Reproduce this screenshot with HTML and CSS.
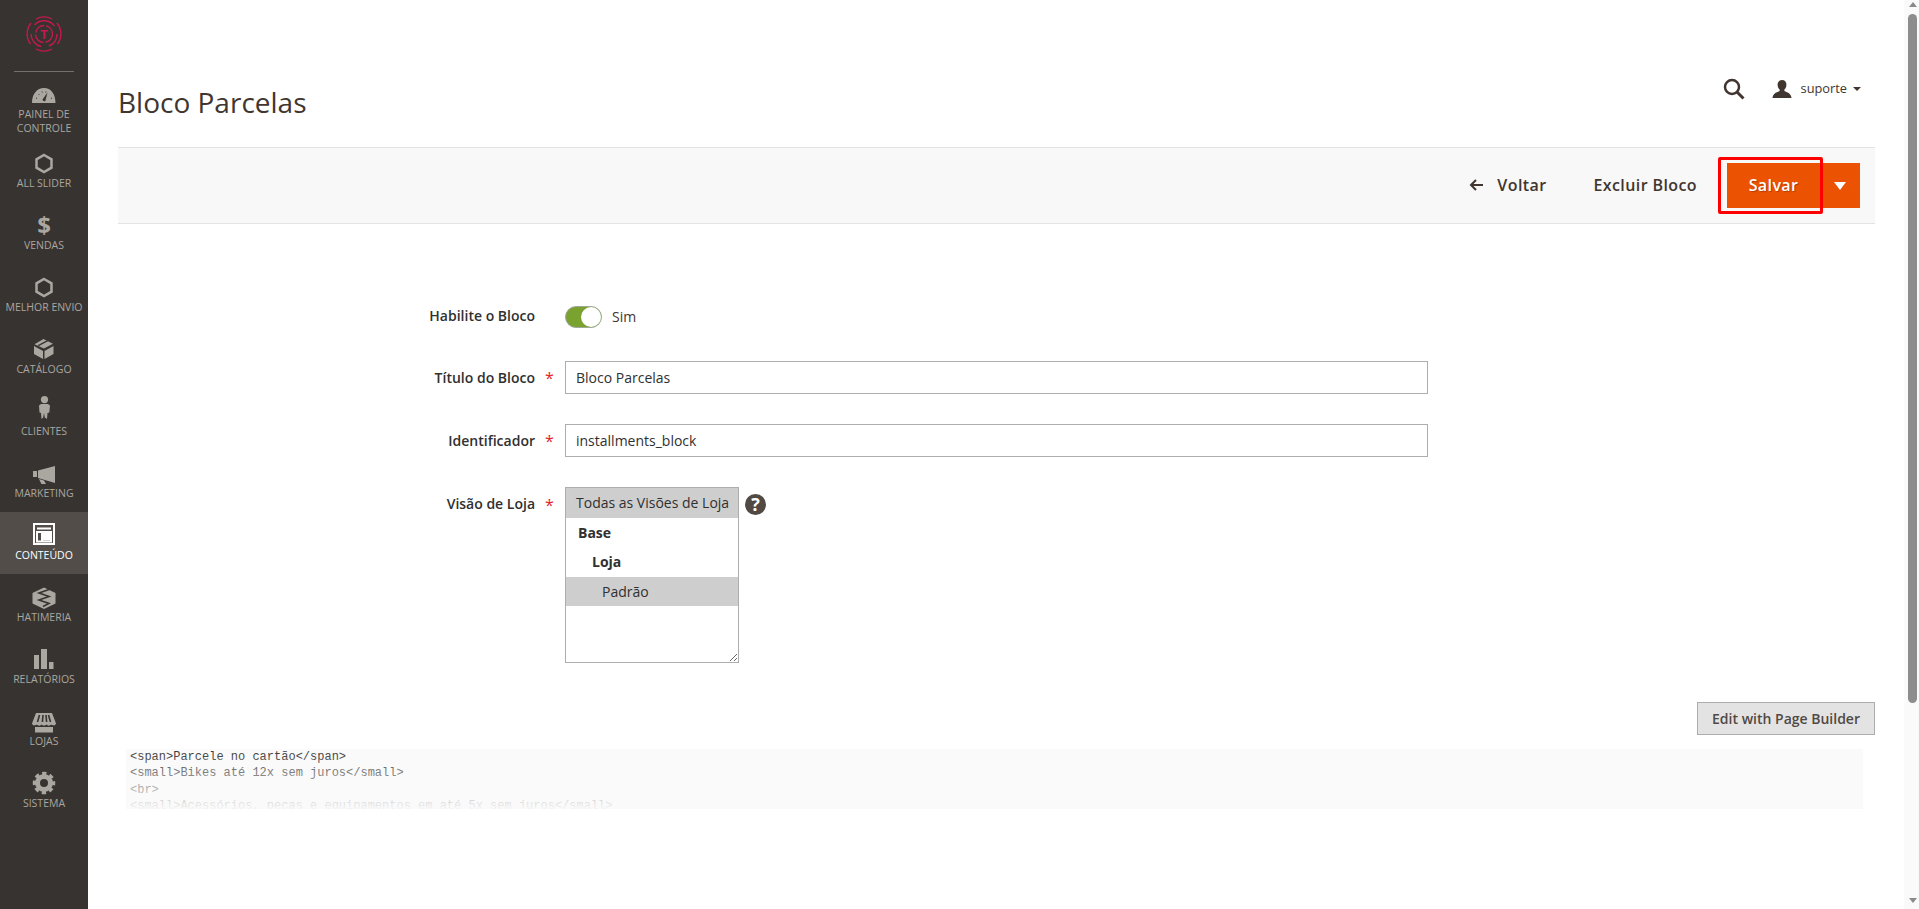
FILE: index.html
```html
<!DOCTYPE html>
<html lang="pt-BR">
<head>
<meta charset="utf-8">
<title>Bloco Parcelas</title>
<link rel="stylesheet" href="styles.css">
</head>
<body>
<nav class="sidebar">
  <div class="logo">
    <svg width="40" height="40" viewBox="0 0 40 40" fill="none" stroke="#c2194f" stroke-width="1.4">
      <path d="M12 5A17 17 0 0 1 28 5"/>
      <path d="M33 9A17 17 0 0 1 33.500 30"/>
      <path d="M28 35A17 17 0 0 1 12 35"/>
      <path d="M6.500 30A17 17 0 0 1 7 9"/>
      <path d="M10.500 11A13 13 0 0 1 30.500 12"/>
      <path d="M33 20A13 13 0 0 1 25 32"/>
      <path d="M17 32.500A13 13 0 0 1 7 20"/>
      <circle cx="20" cy="20" r="8.500" stroke-dasharray="12 2"/>
      <text x="20" y="24.500" class="logo-t">T</text>
    </svg>
  </div>
  <a class="item item-two">
    <svg width="40" height="23" viewBox="0 0 40 23"><path class="fill" fill-rule="evenodd" d="M8 19C8 10 13 4 20 4s11.500 6 11.500 15ZM23.500 8.500l-5 7a2 2 0 0 0 2.800 1.500Z"/><path class="ticks" d="M12 14l1 .5M14.500 10l.8.8M18 7.500l.3 1M22 7.500l-.3 1M28 14l-1 .5"/></svg>
    <span class="label">Painel de Controle</span>
  </a>
  <a class="item">
    <svg width="40" height="28" viewBox="0 0 40 28"><path class="line" d="M20 7 27.500 11.300v8.400L20 24l-7.500-4.300v-8.400Z"/></svg>
    <span class="label">All Slider</span>
  </a>
  <a class="item">
    <span class="dollar">$</span>
    <span class="label">Vendas</span>
  </a>
  <a class="item">
    <svg width="40" height="28" viewBox="0 0 40 28"><path class="line" d="M20 7 27.500 11.300v8.400L20 24l-7.500-4.300v-8.400Z"/></svg>
    <span class="label">Melhor Envio</span>
  </a>
  <a class="item">
    <svg width="40" height="28" viewBox="0 0 40 28"><path class="fill" d="M10 12l9 5v8l-9-5ZM29.500 12l-9 5v8l9-5ZM19.500 5l3 1.500-9 4.700 6.500 3.500-9.500-4.500ZM24 7.300l5 2.500-9 4.700-5-2.500Z"/></svg>
    <span class="label">Catálogo</span>
  </a>
  <a class="item">
    <svg width="40" height="28" viewBox="0 0 40 28"><circle class="fill" cx="20.500" cy="3.600" r="3.600"/><path class="fill" d="M17 8h7l2 1.500-.7 7-1.800.6L23 23l-2.200-1.500L20 17l-.8 4.500L17.500 23l-.5-5.900-1.500-.6-.5-7Z"/></svg>
    <span class="label">Clientes</span>
  </a>
  <a class="item">
    <svg width="40" height="28" viewBox="0 0 40 28"><path class="fill" d="M9 13h4v6H9ZM14 12.500 31 8v17l-17-5ZM15 21l5 1.500 2 3.500h-4.500Z"/></svg>
    <span class="label">Marketing</span>
  </a>
  <a class="item active">
    <svg width="40" height="28" viewBox="0 0 40 28" fill="none" stroke="#fff" stroke-width="2"><rect x="10" y="4" width="20" height="20"/><path d="M13 8.500h14M13 12h14v9.500H13ZM18 12v9.500"/><rect class="cell" x="19" y="13" width="7" height="7.500"/></svg>
    <span class="label">Conteúdo</span>
  </a>
  <a class="item">
    <svg width="40" height="28" viewBox="0 0 40 28"><path class="fill" d="M20 5.500 31.500 11v10.500L20 27 8.500 21.500V11Z"/><path class="cut" d="M25 7.500 15 11l10 3.500-10 3.500 10 3.500-6 3"/></svg>
    <span class="label">Hatimeria</span>
  </a>
  <a class="item">
    <svg width="40" height="28" viewBox="0 0 40 28"><path class="fill" d="M10 11h5v14h-5ZM17 5h6v20h-6ZM25 18h4.500v7H25Z"/></svg>
    <span class="label">Relatórios</span>
  </a>
  <a class="item">
    <svg width="40" height="28" viewBox="0 0 40 28"><path class="fill" d="M12 7h16l4 10.500c-.5 2-3 2.500-4.500 1-1.500 1.500-4 1.500-5 0-1.500 1.500-3.500 1.500-5 0-1 1.500-3.500 1.500-5 0-1.500 1.500-4 1-4.500-1ZM11 21h18v5.500H11Z"/><path class="cut" d="M15.500 9 13.500 16M19 9l-.6 7M22 9l.6 7M24.500 9l2 7"/></svg>
    <span class="label">Lojas</span>
  </a>
  <a class="item">
    <svg width="40" height="28" viewBox="0 0 40 28"><circle class="gear-body" cx="20" cy="15" r="6.500"/><circle class="gear-teeth" cx="20" cy="15" r="9.500"/></svg>
    <span class="label">Sistema</span>
  </a>
</nav>

<main class="main">
  <header class="page-head">
    <h1 class="page-title">Bloco Parcelas</h1>
    <div class="tools">
      <svg class="search" width="22" height="22" viewBox="0 0 22 22" fill="none" stroke="#41362f"><circle cx="9" cy="9" r="7" stroke-width="2.500"/><path d="M14 14l6.500 6.500" stroke-width="3"/></svg>
      <div class="user">
        <svg width="20" height="18" viewBox="0 0 20 18"><path fill="#41362f" d="M10 0c3 0 4.600 2.300 4.400 5-.1 2-1 3.500-2 4.600v1.500C15 12.500 19 13 19.500 18H.5C1 13 5 12.500 7.600 11.100V9.600c-1-1.100-1.900-2.600-2-4.600C5.400 2.300 7 0 10 0Z"/></svg>
        <span class="user-name">suporte</span>
        <span class="caret"></span>
      </div>
    </div>
  </header>

  <div class="actions">
    <a class="action"><svg class="back" width="14" height="12" viewBox="0 0 14 12" fill="none" stroke="#41362f" stroke-width="2"><path d="M14 6H2M7 1 2 6l5 5"/></svg>Voltar</a>
    <a class="action action-delete">Excluir Bloco</a>
    <div class="save-group">
      <button class="save" type="button">Salvar</button>
      <button class="save-more" type="button" aria-label="Mais opções"><span class="save-caret"></span></button>
      <span class="highlight"></span>
    </div>
  </div>

  <form class="form">
    <div class="row row-toggle">
      <label class="field-label">Habilite o Bloco</label>
      <span class="star"></span>
      <div class="toggle-wrap">
        <span class="toggle"><span class="knob"></span></span>
        <span class="toggle-text">Sim</span>
      </div>
    </div>
    <div class="row">
      <label class="field-label">Título do Bloco</label>
      <span class="star">*</span>
      <input class="input" type="text" value="Bloco Parcelas">
    </div>
    <div class="row">
      <label class="field-label">Identificador</label>
      <span class="star">*</span>
      <input class="input" type="text" value="installments_block">
    </div>
    <div class="row row-top">
      <label class="field-label">Visão de Loja</label>
      <span class="star">*</span>
      <div class="multi">
        <div class="opt selected">Todas as Visões de Loja</div>
        <div class="opt group-1">Base</div>
        <div class="opt group-2">Loja</div>
        <div class="opt leaf selected">Padrão</div>
      </div>
      <span class="help">?</span>
    </div>
  </form>

  <div class="builder-bar"><button class="builder" type="button">Edit with Page Builder</button></div>

  <div class="code">
    <div>&lt;span&gt;Parcele no cartão&lt;/span&gt;</div>
    <div>&lt;small&gt;Bikes até 12x sem juros&lt;/small&gt;</div>
    <div>&lt;br&gt;</div>
    <div>&lt;small&gt;Acessórios, peças e equipamentos em até 5x sem juros&lt;/small&gt;</div>
  </div>
</main>

<aside class="scrollbar">
  <span class="arrow-up"></span>
  <span class="thumb"></span>
  <span class="arrow-down"></span>
</aside>
</body>
</html>
```
FILE: styles.css
```css
* { box-sizing: border-box; }
html, body { height: 100%; }
body {
  margin: 0;
  height: 909px;
  overflow: hidden;
  display: flex;
  background: #fff;
  color: #303030;
  font-family: "Open Sans", sans-serif;
  font-size: 14px;
}

/* Sidebar */
.sidebar {
  width: 88px;
  flex: none;
  background: #373330;
  display: flex;
  flex-direction: column;
  align-items: stretch;
}
.logo {
  height: 78px;
  padding-top: 14px;
  display: flex;
  justify-content: center;
  position: relative;
}
.logo::after {
  content: "";
  position: absolute;
  left: 14px;
  right: 14px;
  top: 71px;
  height: 1px;
  background: #736f6b;
}
.logo-t {
  fill: #c2194f;
  stroke: none;
  font: 700 13px "Open Sans", sans-serif;
  text-anchor: middle;
}
.item {
  height: 62px;
  padding-top: 8px;
  display: flex;
  flex-direction: column;
  align-items: center;
  color: #aaa6a0;
}
.item-two { padding-top: 6px; }
.item svg { display: block; flex: none; }
.label {
  font-size: 10.500px;
  line-height: 14px;
  text-transform: uppercase;
  text-align: center;
}
.item.active { background: #524d49; color: #fff; }
.cell { fill: #fff; stroke: none; }
.dollar {
  height: 28px;
  padding-top: 3px;
  font-size: 24px;
  line-height: 24px;
  font-weight: 700;
  color: #aaa6a0;
}
.fill { fill: #aaa6a0; }
.ticks { fill: none; stroke: #373330; stroke-width: 1; }
.line { fill: none; stroke: #aaa6a0; stroke-width: 2.5; }
.cut { fill: none; stroke: #373330; stroke-width: 1.6; }
.gear-body { fill: none; stroke: #aaa6a0; stroke-width: 5; }
.gear-teeth { fill: none; stroke: #aaa6a0; stroke-width: 3.5; stroke-dasharray: 4.200 3.260; stroke-dashoffset: 2.100; }

/* Main */
.main {
  flex: 1;
  min-width: 0;
  padding: 0 29px 0 30px;
  display: flex;
  flex-direction: column;
}
.page-head {
  height: 147px;
  display: flex;
  justify-content: space-between;
  align-items: flex-start;
}
.page-title {
  margin: 83px 0 0;
  font-size: 28px;
  line-height: 38px;
  font-weight: 400;
  color: #41362f;
}
.tools {
  margin-top: 78px;
  margin-right: 14px;
  display: flex;
  align-items: center;
}
.search { margin-right: 27px; }
.user { display: flex; align-items: center; color: #41362f; }
.user-name { margin-left: 9px; font-size: 12.800px; line-height: 18px; margin-top: -2px; }
.caret {
  margin-left: 6px;
  width: 0;
  height: 0;
  border-left: 4px solid transparent;
  border-right: 4px solid transparent;
  border-top: 4.500px solid #41362f;
}

.actions {
  height: 77px;
  padding-right: 15px;
  background: #f8f8f8;
  border-top: 1px solid #e3e3e3;
  border-bottom: 1px solid #e3e3e3;
  display: flex;
  justify-content: flex-end;
  align-items: center;
}
.action {
  display: flex;
  align-items: center;
  margin-top: -2px;
  font-size: 16px;
  font-weight: 600;
  letter-spacing: .4px;
  color: #41362f;
}
.back { margin-right: 14px; }
.action-delete { margin-left: 47px; margin-right: 30px; }
.save-group { position: relative; display: flex; }
.save, .save-more {
  height: 45px;
  border: 0;
  background: #eb5202;
  color: #fff;
  font-family: inherit;
  padding: 0;
}
.save {
  width: 93px;
  padding-bottom: 2px;
  font-size: 16px;
  font-weight: 600;
  letter-spacing: .4px;
  text-shadow: 1px 1px 1px rgba(0,0,0,.25);
}
.save-more { width: 40px; display: flex; align-items: center; justify-content: center; }
.save-caret {
  width: 0;
  height: 0;
  border-left: 6px solid transparent;
  border-right: 6px solid transparent;
  border-top: 8px solid #fff;
}
.highlight {
  position: absolute;
  left: -9px;
  top: -6px;
  width: 105px;
  height: 57px;
  border: 3px solid #f00;
  border-radius: 2px;
  pointer-events: none;
}

/* Form */
.form {
  padding-top: 82px;
  display: flex;
  flex-direction: column;
  gap: 30px;
}
.row {
  display: flex;
  align-items: center;
}
.row-toggle { height: 25px; align-items: flex-start; }
.row-top { align-items: flex-start; }
.field-label {
  width: 417px;
  flex: none;
  text-align: right;
  font-weight: 600;
  line-height: 20px;
  color: #303030;
}
.row-top .field-label { padding-top: 7px; }
.star {
  width: 30px;
  flex: none;
  padding-left: 10px;
  color: #e22626;
  font-size: 16px;
  line-height: 20px;
}
.row-top .star { padding-top: 8px; }
.toggle-wrap { display: flex; align-items: center; height: 22px; }
.toggle {
  width: 37px;
  height: 22px;
  border-radius: 11px;
  background: #79a22e;
  border: 1px solid #9fa89a;
  display: flex;
  justify-content: flex-end;
}
.knob {
  width: 20px;
  height: 20px;
  border-radius: 50%;
  background: #fff;
}
.toggle-text { margin-left: 10px; margin-top: -2px; color: #41362f; }
.input {
  width: 863px;
  height: 33px;
  padding: 0 10px;
  border: 1px solid #adadad;
  background: #fff;
  color: #303030;
  font: 14px "Open Sans", sans-serif;
}
.multi {
  width: 174px;
  height: 176px;
  border: 1px solid #adadad;
  background: #fff;
  overflow: hidden;
  resize: both;
  flex: none;
}
.opt {
  height: 29.500px;
  line-height: 29px;
  padding-left: 10px;
  white-space: nowrap;
  color: #303030;
}
.selected { background: #cecece; }
.group-1 { font-weight: 700; padding-left: 12px; }
.group-2 { font-weight: 700; padding-left: 26px; }
.leaf { padding-left: 36px; }
.help {
  width: 21px;
  height: 21px;
  margin: 7px 0 0 6px;
  border-radius: 50%;
  background: #514943;
  color: #fff;
  font-size: 18px;
  font-weight: 700;
  line-height: 21px;
  text-align: center;
  flex: none;
}

.builder-bar {
  margin-top: 39px;
  display: flex;
  justify-content: flex-end;
}
.builder {
  width: 178px;
  height: 33px;
  padding: 0;
  border: 1px solid #adadad;
  background: #e3e3e3;
  color: #514943;
  font: 600 14px "Open Sans", sans-serif;
}

.code {
  position: relative;
  height: 60px;
  margin: 14px 12px 0 8px;
  padding: 0 0 0 4px;
  overflow: hidden;
  background: #fafafa;
  color: #333;
  font-family: "Liberation Mono", monospace;
  font-size: 12px;
  line-height: 16.400px;
  white-space: nowrap;
}
.code::after {
  content: "";
  position: absolute;
  inset: 0;
  background: linear-gradient(to bottom, rgba(250,250,250,0) 0, rgba(250,250,250,.97) 100%);
}

/* Page scrollbar */
.scrollbar {
  width: 15px;
  flex: none;
  background: #fafafa;
  padding: 2px 2px 6px 4px;
  display: flex;
  flex-direction: column;
  align-items: center;
}
.arrow-up, .arrow-down {
  width: 0;
  height: 0;
  flex: none;
  border-left: 4.500px solid transparent;
  border-right: 4.500px solid transparent;
}
.arrow-up { border-bottom: 5px solid #8a8a8a; }
.arrow-down { margin-top: auto; border-top: 5px solid #8a8a8a; }
.thumb {
  width: 9px;
  height: 689px;
  margin-top: 7px;
  background: #8d8d8d;
  border-radius: 4.500px;
  flex: none;
}
```
